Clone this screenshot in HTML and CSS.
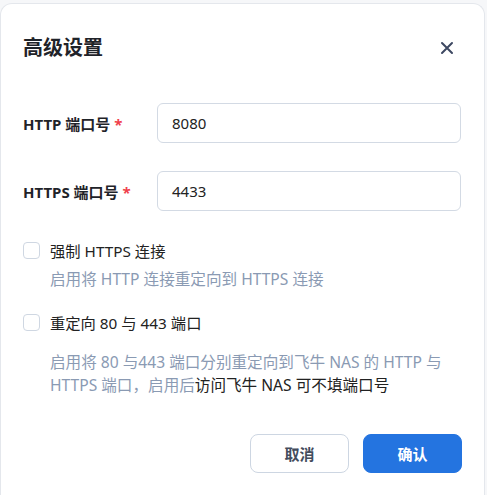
FILE: index.html
```html
<!DOCTYPE html>
<html lang="zh-CN">
<head>
<meta charset="utf-8">
<title>高级设置</title>
<link rel="stylesheet" href="styles.css">
</head>
<body>
<div class="dialog">
  <div class="header">
    <h1 class="title">高级设置</h1>
    <button class="close" aria-label="关闭">
      <svg width="14" height="14" viewBox="0 0 14 14"><path d="M2 2 L12 12 M12 2 L2 12" stroke="#3d4862" stroke-width="2" stroke-linecap="round"/></svg>
    </button>
  </div>
  <div class="form">
    <div class="field">
      <label class="label">HTTP 端口号 <span class="req">*</span></label>
      <div class="input">8080</div>
    </div>
    <div class="field">
      <label class="label">HTTPS 端口号 <span class="req">*</span></label>
      <div class="input">4433</div>
    </div>
    <div class="check first">
      <span class="box"></span>
      <span class="check-text">强制 HTTPS 连接</span>
    </div>
    <p class="desc desc-one">启用将 HTTP 连接重定向到 HTTPS 连接</p>
    <div class="check second">
      <span class="box"></span>
      <span class="check-text">重定向 80 与 443 端口</span>
    </div>
    <div class="desc desc-two">
      <div class="desc-line">启用将 80 与443 端口分别重定向到飞牛 NAS 的 HTTP 与</div>
      <div class="desc-line"><span class="grey">HTTPS 端口，启用后</span><span class="dark">访问飞牛 NAS 可不填端口号</span></div>
    </div>
  </div>
  <div class="footer">
    <button class="btn cancel">取消</button>
    <button class="btn ok">确认</button>
  </div>
</div>
</body>
</html>
```
FILE: styles.css
```css
* { box-sizing: border-box; }
html, body { margin: 0; padding: 0; }
body {
  background: #f6f7f9;
  font-family: "Noto Sans", "Noto Sans CJK SC", sans-serif;
  color: #1f2329;
  overflow: hidden;
}
.dialog {
  margin-top: 3px;
  width: 485px;
  height: 492px;
  background: #ffffff;
  border: 1px solid #e4e7ec;
  border-bottom: 0;
  border-radius: 12px 12px 0 0;
  padding: 24px 22px 0 22px;
}
.header {
  display: flex;
  align-items: center;
  justify-content: space-between;
  height: 40px;
}
.title {
  margin: 0;
  font-size: 20px;
  font-weight: 700;
  color: #1f2329;
  line-height: 40px;
}
.close {
  border: 0;
  background: none;
  padding: 0;
  width: 14px;
  height: 14px;
  margin-right: 8px;
  display: flex;
}
.form { margin-top: 35px; }
.field {
  display: flex;
  align-items: center;
  margin-bottom: 28px;
}
.label {
  width: 134px;
  flex: none;
  font-size: 15px;
  font-weight: 700;
  color: #1f2329;
}
.req { color: #f0414b; font-weight: 700; }
.input {
  width: 304px;
  height: 40px;
  border: 1px solid #d3dae4;
  border-radius: 6px;
  padding-left: 14px;
  display: flex;
  align-items: center;
  font-size: 15px;
  color: #222;
}
.check {
  display: flex;
  align-items: center;
  height: 22px;
}
.second { margin-top: 20px; }
.box {
  width: 17px;
  height: 17px;
  border: 1px solid #cfd7e2;
  border-radius: 4px;
  margin-right: 10px;
  flex: none;
}
.check-text {
  font-size: 15.3px;
  color: #222;
}
.desc {
  margin: 0;
  padding-left: 27px;
  font-size: 15.6px;
  color: #8a9ab3;
  line-height: 23px;
}
.desc-line { white-space: nowrap; }
.desc-one { margin-top: 7px; }
.desc-two { margin-top: 18px; }
.grey { color: #8a9ab3; }
.dark { color: #222; }
.footer {
  display: flex;
  justify-content: flex-end;
  gap: 14px;
  margin-top: 37px;
}
.btn {
  width: 99px;
  height: 39px;
  border-radius: 8px;
  font-family: inherit;
  font-size: 15px;
  font-weight: 700;
}
.cancel {
  background: #fff;
  border: 1px solid #cdd6e2;
  color: #434c5c;
}
.ok {
  background: #2474e0;
  border: 1px solid #2474e0;
  color: #fff;
}
```
